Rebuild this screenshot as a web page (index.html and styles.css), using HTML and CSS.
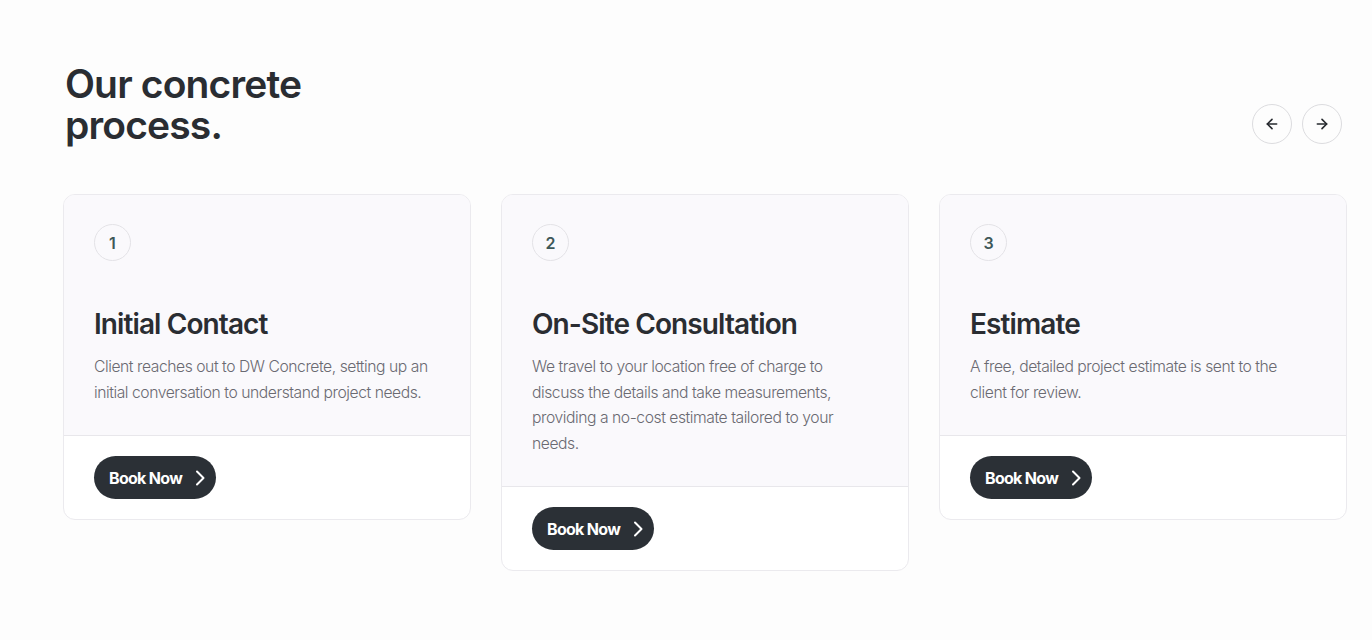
FILE: index.html
```html
<!DOCTYPE html>
<html lang="en">
<head>
<meta charset="utf-8">
<title>Our concrete process</title>
<link rel="stylesheet" href="styles.css">
</head>
<body>
<section class="process">
  <header class="process-head">
    <h2 class="process-title">Our concrete<br>process.</h2>
    <div class="nav">
      <button class="nav-btn" aria-label="Previous">
        <svg width="16" height="16" viewBox="0 0 24 24" fill="none" stroke="currentColor" stroke-width="2.4" stroke-linecap="round" stroke-linejoin="round"><path d="M19 12H5"/><path d="M12 19l-7-7 7-7"/></svg>
      </button>
      <button class="nav-btn" aria-label="Next">
        <svg width="16" height="16" viewBox="0 0 24 24" fill="none" stroke="currentColor" stroke-width="2.4" stroke-linecap="round" stroke-linejoin="round"><path d="M5 12h14"/><path d="M12 5l7 7-7 7"/></svg>
      </button>
    </div>
  </header>
  <div class="cards">
    <article class="card">
      <div class="card-body">
        <span class="step">1</span>
        <h3 class="card-title">Initial Contact</h3>
        <p class="card-text">Client reaches out to DW Concrete, setting up an initial conversation to understand project needs.</p>
      </div>
      <div class="card-foot">
        <a class="book" href="#">Book Now
          <svg width="16" height="16" viewBox="0 0 16 16" fill="none" stroke="currentColor" stroke-width="2" stroke-linecap="round" stroke-linejoin="round"><path d="M5 1.5l6.5 6.5-6.5 6.5"/></svg>
        </a>
      </div>
    </article>
    <article class="card">
      <div class="card-body">
        <span class="step">2</span>
        <h3 class="card-title">On-Site Consultation</h3>
        <p class="card-text">We travel to your location free of charge to discuss the details and take measurements, providing a no-cost estimate tailored to your needs.</p>
      </div>
      <div class="card-foot">
        <a class="book" href="#">Book Now
          <svg width="16" height="16" viewBox="0 0 16 16" fill="none" stroke="currentColor" stroke-width="2" stroke-linecap="round" stroke-linejoin="round"><path d="M5 1.5l6.5 6.5-6.5 6.5"/></svg>
        </a>
      </div>
    </article>
    <article class="card">
      <div class="card-body">
        <span class="step">3</span>
        <h3 class="card-title">Estimate</h3>
        <p class="card-text">A free, detailed project estimate is sent to the client for review.</p>
      </div>
      <div class="card-foot">
        <a class="book" href="#">Book Now
          <svg width="16" height="16" viewBox="0 0 16 16" fill="none" stroke="currentColor" stroke-width="2" stroke-linecap="round" stroke-linejoin="round"><path d="M5 1.5l6.5 6.5-6.5 6.5"/></svg>
        </a>
      </div>
    </article>
  </div>
</section>
</body>
</html>
```
FILE: styles.css
```css
* { box-sizing: border-box; }
html, body { margin: 0; }
body {
  background: #fdfdfd;
  font-family: Inter, "Noto Sans", "Liberation Sans", sans-serif;
  color: #2a2d32;
  width: 1372px;
  height: 640px;
  overflow: hidden;
}
.process {
  padding: 63px 0 0 63px;
}
.process-head {
  display: flex;
  justify-content: space-between;
  align-items: flex-end;
  padding-right: 30px;
  padding-left: 2px;
}
.process-title {
  margin: 0;
  font-size: 39px;
  line-height: 41px;
  font-weight: 600;
  letter-spacing: -0.85px;
  color: #2a2d32;
}
.nav {
  display: flex;
  gap: 10px;
  margin-bottom: 1px;
}
.nav-btn {
  width: 40px;
  height: 40px;
  border-radius: 50%;
  border: 1px solid #dcdcdf;
  background: #fdfdfd;
  color: #25282d;
  display: flex;
  align-items: center;
  justify-content: center;
  padding: 0;
}
.cards {
  display: flex;
  gap: 30px;
  align-items: flex-start;
  margin-top: 49px;
}
.card {
  flex: 0 0 408px;
  border: 1px solid #ebeaee;
  border-radius: 12px;
  background: #fff;
  overflow: hidden;
}
.card-body {
  background: #faf9fc;
  padding: 29px 30px 30px;
  border-bottom: 1px solid #e8e7eb;
}
.step {
  display: flex;
  align-items: center;
  justify-content: center;
  width: 37px;
  height: 37px;
  border-radius: 50%;
  border: 1px solid #e3e2e6;
  font-size: 16px;
  font-weight: 600;
  color: #3e5858;
}
.card-title {
  margin: 46px 0 13px;
  font-size: 28px;
  line-height: 34px;
  font-weight: 600;
  letter-spacing: -0.9px;
  color: #2a2d32;
}
.card-text {
  margin: 0;
  font-size: 15.7px;
  line-height: 25.5px;
  font-weight: 300;
  letter-spacing: -0.45px;
  color: #6a6a72;
  max-width: 346px;
}
.card-foot {
  padding: 20px 30px 20px;
}
.book {
  display: inline-flex;
  align-items: center;
  gap: 10px;
  height: 43px;
  padding: 0 8px 0 15px;
  border-radius: 22px;
  background: #2b3036;
  color: #fff;
  text-decoration: none;
  font-size: 16px;
  font-weight: 700;
  letter-spacing: -0.7px;
}
```
